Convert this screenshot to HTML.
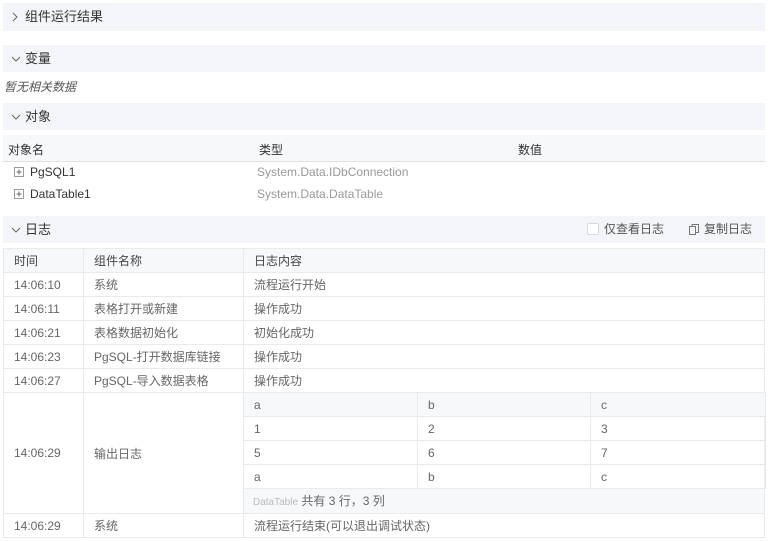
<!DOCTYPE html>
<html><head><meta charset="utf-8"><style>
*{box-sizing:border-box;margin:0;padding:0}
body{width:768px;height:541px;background:#fff;font-family:"Liberation Sans","Noto Sans CJK SC",sans-serif;font-size:12px;color:#555;position:relative;overflow:hidden}
.hd{position:absolute;left:3px;width:762px;height:27px;background:#f3f5f9;color:#333;font-size:13px;line-height:27px;padding-left:22px}
.hd svg{position:absolute;left:8px;top:9px}
.abs{position:absolute;white-space:nowrap}
table{border-collapse:collapse;position:absolute;table-layout:fixed}
td{border:1px solid #e8eaef;height:24px;padding:0 10px;color:#666;vertical-align:middle;white-space:nowrap}
.th td{background:#f7f8fa;color:#444}
.inner td{color:#666}
</style></head><body>
<div class="hd" style="top:3px;height:28px"><svg width="8" height="10"><path d="M2 1 L6 5 L2 9" stroke="#666" fill="none"/></svg>组件运行结果</div>
<div class="hd" style="top:45px"><svg width="10" height="8" style="top:10px"><path d="M1 2 L5 6 L9 2" stroke="#666" fill="none"/></svg>变量</div>
<div class="abs" style="left:4px;top:78px;font-style:italic;color:#555">暂无相关数据</div>
<div class="hd" style="top:103px"><svg width="10" height="8" style="top:10px"><path d="M1 2 L5 6 L9 2" stroke="#666" fill="none"/></svg>对象</div>
<div class="abs" style="left:3px;top:135px;width:762px;height:27px;background:#f7f8fa;border-bottom:1px solid #e0e2e6"></div>
<div class="abs" style="left:8px;top:141px;color:#333">对象名</div>
<div class="abs" style="left:259px;top:141px;color:#333">类型</div>
<div class="abs" style="left:518px;top:141px;color:#333">数值</div>
<svg class="abs" style="left:14px;top:167px" width="10" height="10"><rect x="0.5" y="0.5" width="9" height="9" fill="none" stroke="#999"/><path d="M2.5 5H7.5M5 2.5V7.5" stroke="#666"/></svg>
<div class="abs" style="left:30px;top:165px;color:#333">PgSQL1</div>
<div class="abs" style="left:257px;top:165px;color:#999">System.Data.IDbConnection</div>
<svg class="abs" style="left:14px;top:189px" width="10" height="10"><rect x="0.5" y="0.5" width="9" height="9" fill="none" stroke="#999"/><path d="M2.5 5H7.5M5 2.5V7.5" stroke="#666"/></svg>
<div class="abs" style="left:30px;top:187px;color:#333">DataTable1</div>
<div class="abs" style="left:257px;top:187px;color:#999">System.Data.DataTable</div>
<div class="hd" style="top:216px"><svg width="10" height="8" style="top:10px"><path d="M1 2 L5 6 L9 2" stroke="#666" fill="none"/></svg>日志
<span class="abs" style="left:584px;top:7px;width:12px;height:12px;border:1px solid #d5d8de;border-radius:2px;background:#fff"></span>
<span class="abs" style="left:601px;top:0;color:#555;font-size:12px">仅查看日志</span>
<svg class="abs" style="left:686px;top:8px" width="10" height="11"><rect x="0.5" y="2.5" width="6" height="8" fill="none" stroke="#777"/><path d="M3 2.5V0.5H9.5V8.5H7" fill="none" stroke="#777"/></svg>
<span class="abs" style="left:701px;top:0;color:#555;font-size:12px">复制日志</span></div>
<table style="left:3px;top:248px;width:762px">
<colgroup><col style="width:80px"><col style="width:160px"><col></colgroup>
<tr class="th"><td>时间</td><td>组件名称</td><td>日志内容</td></tr>
<tr><td>14:06:10</td><td>系统</td><td>流程运行开始</td></tr>
<tr><td>14:06:11</td><td>表格打开或新建</td><td>操作成功</td></tr>
<tr><td>14:06:21</td><td>表格数据初始化</td><td>初始化成功</td></tr>
<tr><td>14:06:23</td><td>PgSQL-打开数据库链接</td><td>操作成功</td></tr>
<tr><td>14:06:27</td><td>PgSQL-导入数据表格</td><td>操作成功</td></tr>
<tr><td style="height:120px">14:06:29</td><td>输出日志</td><td style="padding:0;position:relative;vertical-align:top">
<table class="inner" style="position:static;margin:-1px 0 0 -1px;width:523px">
<colgroup><col style="width:174px"><col style="width:173px"><col></colgroup>
<tr class="th"><td>a</td><td>b</td><td>c</td></tr>
<tr><td>1</td><td>2</td><td>3</td></tr>
<tr><td>5</td><td>6</td><td>7</td></tr>
<tr><td>a</td><td>b</td><td>c</td></tr>
</table>
<div style="height:24px;background:#f7f8fa;line-height:24px;padding-left:9px;color:#666"><span style="color:#bbb;font-size:10px">DataTable</span> 共有 3 行，3 列</div>
</td></tr>
<tr><td>14:06:29</td><td>系统</td><td>流程运行结束(可以退出调试状态)</td></tr>
</table>
</body></html>
